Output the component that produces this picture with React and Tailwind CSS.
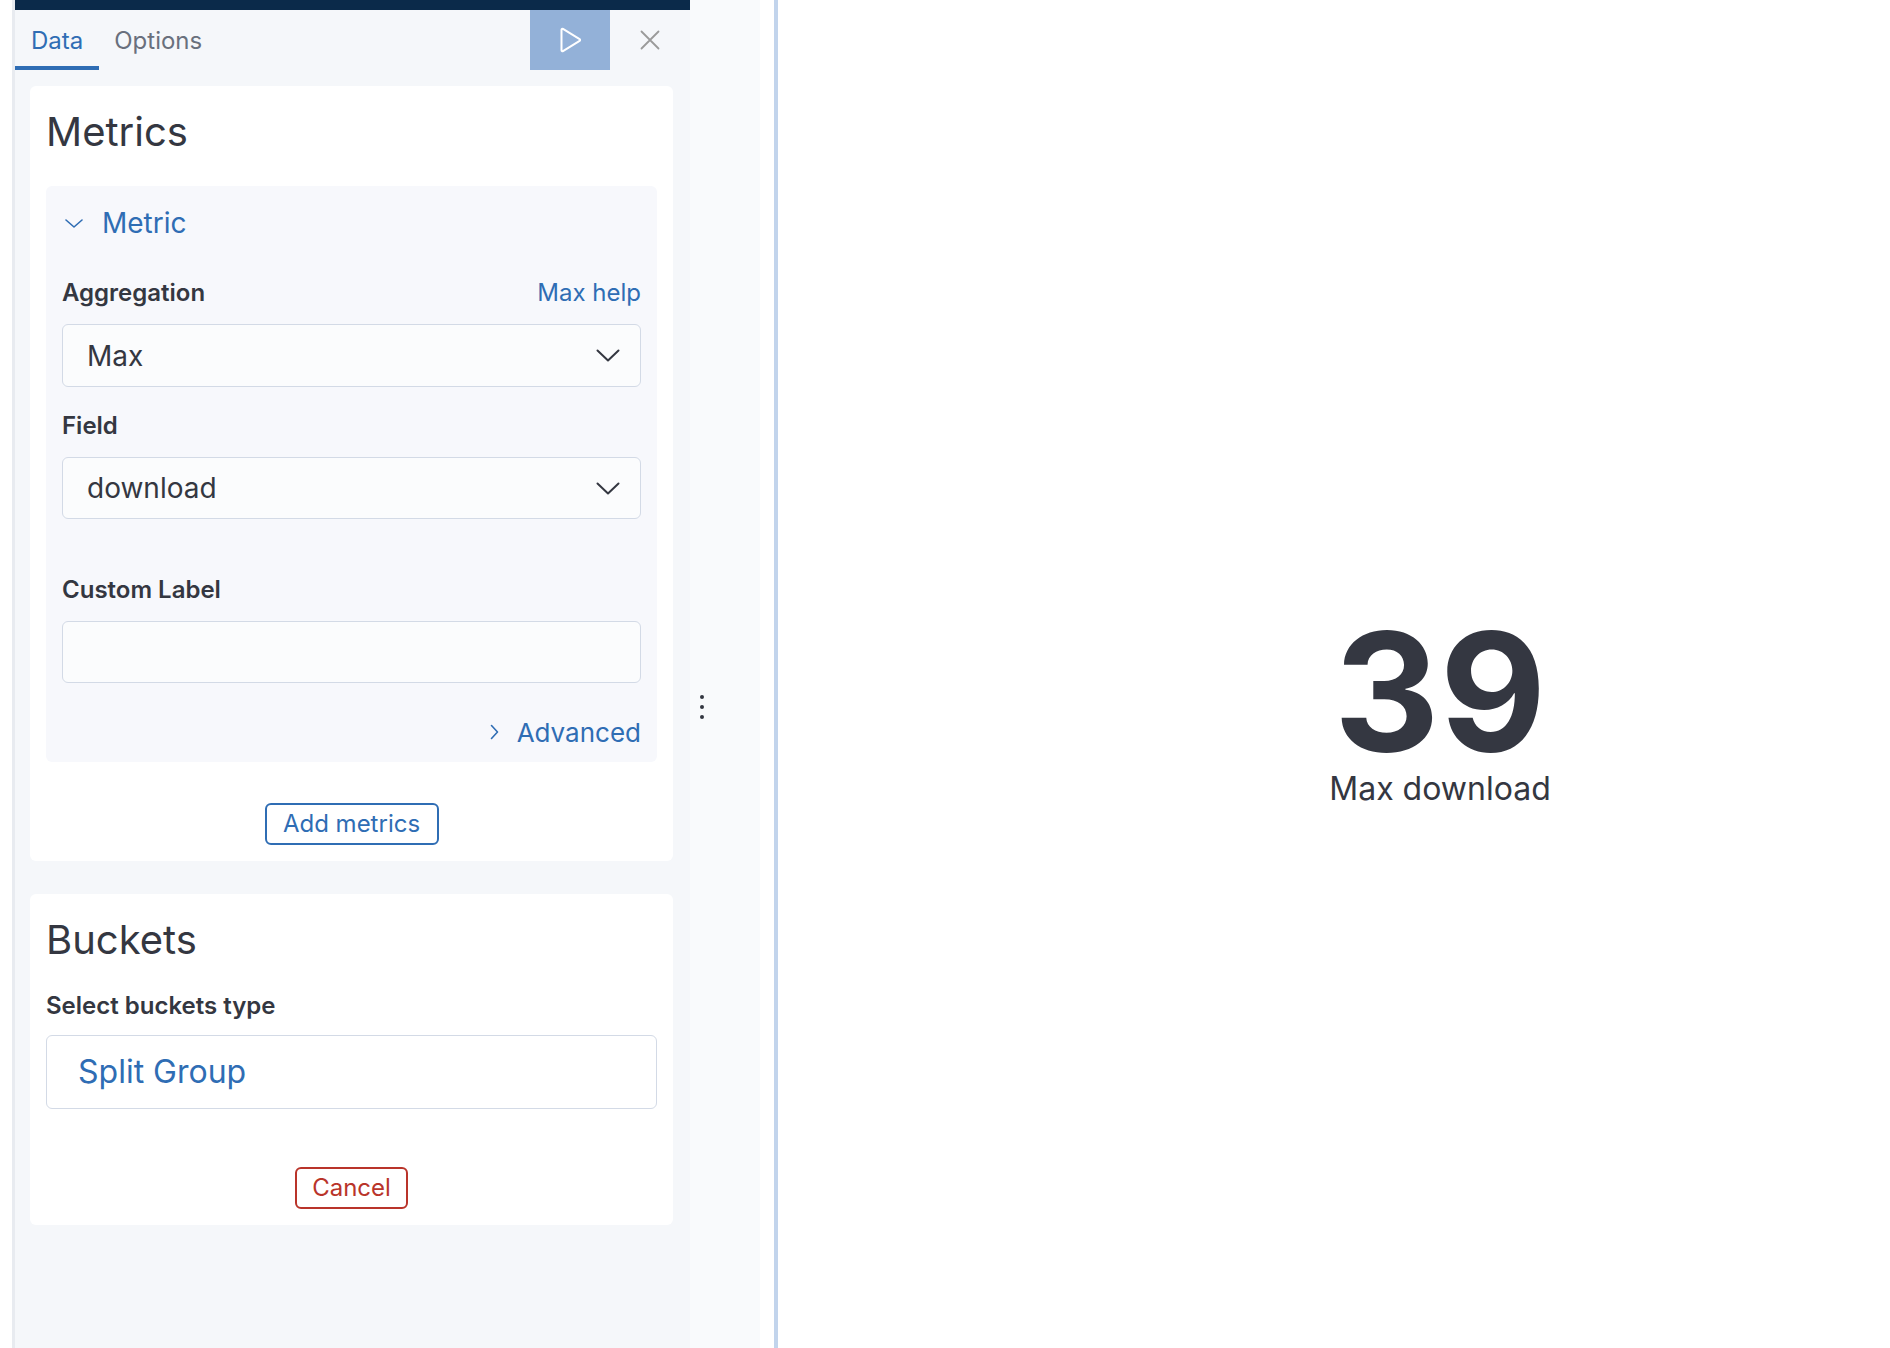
import React from "react";

function SelectChevron() {
  return (
    <svg viewBox="0 0 24 13" className="w-[24px] h-[13px] text-[#343741]" fill="none" stroke="currentColor" strokeWidth="2" strokeLinecap="round" strokeLinejoin="round">
      <path d="M1.5 1.5L12 11.5L22.5 1.5" />
    </svg>
  );
}

function AccordionChevron() {
  return (
    <svg viewBox="0 0 18 9" className="w-[18px] h-[9px] text-[#2f6db4]" fill="none" stroke="currentColor" strokeWidth="1.6" strokeLinecap="round" strokeLinejoin="round">
      <path d="M1 1L9 8L17 1" />
    </svg>
  );
}

function RightChevron() {
  return (
    <svg viewBox="0 0 9 16" className="w-[9px] h-[16px] text-[#2f6db4]" fill="none" stroke="currentColor" strokeWidth="1.6" strokeLinecap="round" strokeLinejoin="round">
      <path d="M1.5 1.5L7.5 8L1.5 14.5" />
    </svg>
  );
}

function PlayIcon() {
  return (
    <svg viewBox="0 0 22 26" className="w-[22px] h-[26px] text-white" fill="none" stroke="currentColor" strokeWidth="2" strokeLinejoin="round">
      <path d="M2.5 2.8v20.4a1 1 0 0 0 1.5.86l16.6-10.2a1 1 0 0 0 0-1.72L4 1.94a1 1 0 0 0-1.5.86z" />
    </svg>
  );
}

function CloseIcon() {
  return (
    <svg viewBox="0 0 20 20" className="w-[20px] h-[20px] text-[#9a9a9a]" fill="none" stroke="currentColor" strokeWidth="1.8" strokeLinecap="round">
      <path d="M1.5 1.5L18.5 18.5M18.5 1.5L1.5 18.5" />
    </svg>
  );
}

function FieldLabel({ children, className = "" }) {
  return (
    <div className={`h-[30px] flex items-center text-[24px] font-semibold text-[#343741] ${className}`}>
      {children}
    </div>
  );
}

function SelectBox({ value, className = "" }) {
  return (
    <div className={`border border-[#d3dae6] rounded-[6px] bg-[#fbfcfd] flex items-center justify-between pl-[24px] pr-[20px] ${className}`}>
      <span className="text-[28px] text-[#343741]">{value}</span>
      <SelectChevron />
    </div>
  );
}

export default function App() {
  return (
    <div className="w-[1890px] h-[1348px] flex bg-white overflow-hidden font-[family-name:Inter,sans-serif]">
      {/* outer gutter */}
      <div className="w-[12px] h-full bg-white" />

      {/* editor sidebar */}
      <div className="w-[678px] h-full bg-[#f5f7fa] border-l-[3px] border-[#e8ebf0] flex flex-col">
        <div className="h-[10px] bg-[#0b2a4a]" />

        {/* tabs + actions */}
        <div className="h-[60px] flex items-stretch">
          <div className="px-[16px] pt-[6px] flex items-center text-[24px] text-[#2f6db4] border-b-[4px] border-[#2f6db4]">
            Data
          </div>
          <div className="px-[15px] pt-[2px] flex items-center text-[24px] text-[#69707d]">Options</div>
          <div className="flex-1" />
          <div className="w-[80px] bg-[#93b1d8] flex items-center justify-center">
            <PlayIcon />
          </div>
          <div className="w-[80px] flex items-center justify-center">
            <CloseIcon />
          </div>
        </div>

        {/* metrics card */}
        <div className="mt-[16px] ml-[15px] w-[643px] bg-white rounded-[6px] pt-[22px] px-[16px] pb-[16px] flex flex-col">
          <div className="h-[48px] leading-[48px] text-[40px] text-[#343741]">Metrics</div>

          <div className="mt-[30px] bg-[#f7f8fc] rounded-[6px] px-[16px] pt-[20px] pb-[15px] flex flex-col">
            <div className="h-[34px] flex items-center">
              <span className="ml-[3px] mr-[19px] flex items-center">
                <AccordionChevron />
              </span>
              <span className="text-[28px] text-[#2f6db4]">Metric</span>
            </div>

            <div className="mt-[38px] h-[30px] flex items-center justify-between">
              <span className="text-[24px] font-semibold text-[#343741]">Aggregation</span>
              <span className="text-[24px] text-[#2f6db4]">Max help</span>
            </div>
            <SelectBox value="Max" className="mt-[16px] h-[63px]" />

            <FieldLabel className="mt-[24px]">Field</FieldLabel>
            <SelectBox value="download" className="mt-[16px] h-[62px]" />

            <FieldLabel className="mt-[56px]">Custom Label</FieldLabel>
            <div className="mt-[16px] h-[62px] border border-[#d3dae6] rounded-[6px] bg-[#fbfcfd]" />

            <div className="mt-[34px] h-[30px] flex items-center justify-end gap-[18px]">
              <RightChevron />
              <span className="text-[26px] text-[#2f6db4]">Advanced</span>
            </div>
          </div>

          <button className="mt-[41px] self-center h-[42px] w-[174px] border-2 border-[#2f6db4] rounded-[6px] text-[24px] text-[#2f6db4] flex items-center justify-center bg-white">
            Add metrics
          </button>
        </div>

        {/* buckets card */}
        <div className="mt-[33px] ml-[15px] w-[643px] bg-white rounded-[6px] pt-[22px] px-[16px] pb-[16px] flex flex-col">
          <div className="h-[48px] leading-[48px] text-[40px] text-[#343741]">Buckets</div>
          <FieldLabel className="mt-[27px]">Select buckets type</FieldLabel>
          <div className="mt-[14px] h-[74px] border border-[#d3dae6] rounded-[6px] bg-white flex items-center pl-[31px]">
            <span className="text-[32px] text-[#2f6db4]">Split Group</span>
          </div>
          <button className="mt-[58px] self-center h-[42px] w-[113px] border-2 border-[#b9342a] rounded-[6px] text-[24px] text-[#b9342a] flex items-center justify-center bg-white">
            Cancel
          </button>
        </div>
      </div>

      {/* resize handle zone */}
      <div className="w-[70px] h-full bg-[#f9fafc] pl-[10px] pt-[695px] flex flex-col gap-[6px]">
        <div className="w-[4px] h-[4px] rounded-full bg-[#343741]" />
        <div className="w-[4px] h-[4px] rounded-full bg-[#343741]" />
        <div className="w-[4px] h-[4px] rounded-full bg-[#343741]" />
      </div>
      <div className="w-[14px] h-full bg-white" />
      <div className="w-[4px] h-full bg-[#c2d4ec]" />

      {/* visualization */}
      <div className="flex-1 h-full pl-[212px] pt-[617px] flex flex-col items-center">
        <div className="h-[150px] text-[164px] leading-[150px] font-bold text-[#343741]">39</div>
        <div className="mt-[6px] text-[32px] leading-none text-[#343741]">Max download</div>
      </div>
    </div>
  );
}
